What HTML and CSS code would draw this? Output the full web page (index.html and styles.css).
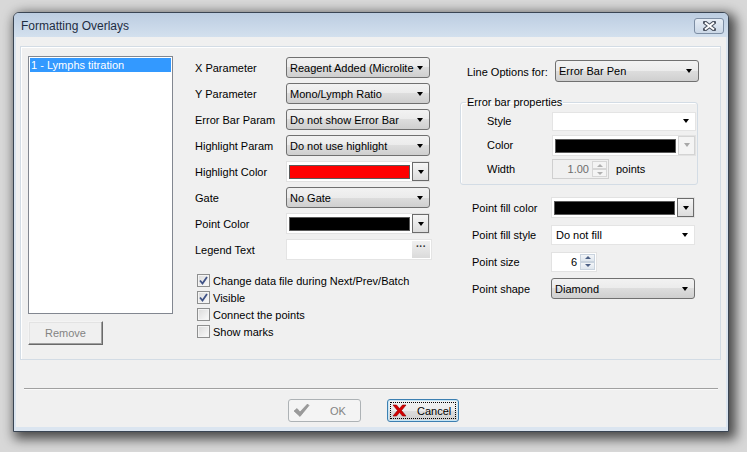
FILE: index.html
```html
<!DOCTYPE html>
<html>
<head>
<meta charset="utf-8">
<link rel="stylesheet" href="styles.css">
</head>
<body>
<div class="window">
  <div class="titlebar">
    <span class="title">Formatting Overlays</span>
    <div class="close">
      <svg width="13" height="10" viewBox="0 0 13 10"><path d="M2 1.5 L11 8.5 M11 1.5 L2 8.5" stroke="#4a5260" stroke-width="4" stroke-linecap="square" fill="none"/><path d="M2 1.5 L11 8.5 M11 1.5 L2 8.5" stroke="#fff" stroke-width="2" fill="none"/></svg>
    </div>
  </div>
  <div class="client">
    <div class="panel">
      <div class="left">
        <div class="list"><div class="item">1 - Lymphs titration</div></div>
        <div class="classic-btn">Remove</div>
      </div>
      <div class="middle">
        <div class="form">
          <span class="lbl">X Parameter</span>
          <div class="combo"><span>Reagent Added (Microlite</span><i class="arrow"></i></div>
          <span class="lbl">Y Parameter</span>
          <div class="combo"><span>Mono/Lymph Ratio</span><i class="arrow"></i></div>
          <span class="lbl">Error Bar Param</span>
          <div class="combo"><span>Do not show Error Bar</span><i class="arrow"></i></div>
          <span class="lbl">Highlight Param</span>
          <div class="combo"><span>Do not use highlight</span><i class="arrow"></i></div>
          <span class="lbl">Highlight Color</span>
          <div class="colorcombo"><div class="swatch red"></div><div class="cbtn"><i class="arrow"></i></div></div>
          <span class="lbl">Gate</span>
          <div class="combo"><span>No Gate</span><i class="arrow"></i></div>
          <span class="lbl">Point Color</span>
          <div class="colorcombo"><div class="swatch black"></div><div class="cbtn"><i class="arrow"></i></div></div>
          <span class="lbl">Legend Text</span>
          <div class="textbox wide"><span class="fill"></span><div class="dots">&middot;&middot;&middot;</div></div>
        </div>
        <div class="checks">
          <div class="check"><span class="box on"><svg width="9" height="9" viewBox="0 0 9 9"><path d="M1 4.5 L3.5 7.5 L8 1" stroke="#3f5286" stroke-width="1.8" fill="none"/></svg></span>Change data file during Next/Prev/Batch</div>
          <div class="check"><span class="box on"><svg width="9" height="9" viewBox="0 0 9 9"><path d="M1 4.5 L3.5 7.5 L8 1" stroke="#3f5286" stroke-width="1.8" fill="none"/></svg></span>Visible</div>
          <div class="check"><span class="box"></span>Connect the points</div>
          <div class="check"><span class="box"></span>Show marks</div>
        </div>
      </div>
      <div class="right">
        <div class="lineopts">
          <span class="lbl lo">Line Options for:</span>
          <div class="combo tall"><span>Error Bar Pen</span><i class="arrow"></i></div>
        </div>
        <fieldset class="group">
          <legend>Error bar properties</legend>
          <div class="ggrid">
            <span class="lbl">Style</span>
            <div class="flat"><span></span><i class="arrow"></i></div>
            <span class="lbl">Color</span>
            <div class="colorcombo"><div class="swatch black"></div><div class="cbtn dis"><i class="arrow grey"></i></div></div>
            <span class="lbl">Width</span>
            <div class="widthrow">
              <div class="spin dis w57"><span class="val">1.00</span><div class="arrows"><div class="up"><i></i></div><div class="down"><i></i></div></div></div>
              <span class="pts">points</span>
            </div>
          </div>
        </fieldset>
        <div class="lgrid">
          <span class="lbl">Point fill color</span>
          <div class="colorcombo"><div class="swatch black"></div><div class="cbtn"><i class="arrow"></i></div></div>
          <span class="lbl">Point fill style</span>
          <div class="flat"><span>Do not fill</span><i class="arrow"></i></div>
          <span class="lbl">Point size</span>
          <div class="spin w46"><span class="val">6</span><div class="arrows"><div class="up"><i></i></div><div class="down"><i></i></div></div></div>
          <span class="lbl">Point shape</span>
          <div class="combo"><span>Diamond</span><i class="arrow"></i></div>
        </div>
      </div>
    </div>
    <div class="sep"></div>
    <div class="buttons">
      <div class="btn ok">
        <svg width="17" height="15" viewBox="0 0 17 15"><path d="M1 8 L4 5.5 L7 9 L14.5 1 L16 2.5 L7 13.5 Z" fill="#9a9a9a" stroke="#8a8a8a" stroke-width="0.6"/></svg>
        <span class="btxt">OK</span>
      </div>
      <div class="btn cancel">
        <div class="focus">
          <svg width="15" height="13" viewBox="0 0 15 13"><path d="M1 1 L4.5 1 L7.5 4.5 L10.5 1 L14 1 L9.5 6.5 L14 12 L10.5 12 L7.5 8.5 L4.5 12 L1 12 L5.5 6.5 Z" fill="#d40000" stroke="#8c0000" stroke-width="0.6"/></svg>
          <span class="btxt">Cancel</span>
        </div>
      </div>
    </div>
  </div>
</div>
</body>
</html>
```
FILE: styles.css
```css
html, body {
  margin: 0;
  padding: 0;
}
body {
  width: 747px;
  height: 452px;
  overflow: hidden;
  background: #d8d8d8;
  font-family: "Liberation Sans", Arial, sans-serif;
  font-size: 11px;
  color: #000;
}
.window {
  box-sizing: border-box;
  width: 716px;
  height: 420px;
  margin: 12px 0 0 13px;
  display: inline-flex;
  flex-direction: column;
  vertical-align: top;
  border: 1px solid #3a4553;
  border-radius: 6px 6px 0 0;
  background: #dbe5f0;
  box-shadow: 4px 4px 12px 3px rgba(0, 0, 0, 0.66);
}
.titlebar {
  height: 24px;
  flex: none;
  display: flex;
  align-items: center;
  padding: 2px 4px 0 7px;
  box-sizing: border-box;
  background: linear-gradient(#bccde1, #d3e0ee);
  border-radius: 5px 5px 0 0;
}
.title {
  font-size: 12px;
  color: #1e2d42;
}
.close {
  margin-left: auto;
  width: 30px;
  height: 16px;
  box-sizing: border-box;
  border: 1px solid #7d8ea4;
  border-radius: 3px;
  background: linear-gradient(#e6edf5, #cbd8e7);
  display: flex;
  align-items: center;
  justify-content: center;
}
.client {
  flex: 1;
  margin: 0 2px 4px 2px;
  background: #f0f0f0;
  display: flex;
  flex-direction: column;
  padding: 9px 5px 0 4px;
}
.panel {
  height: 314px;
  box-sizing: border-box;
  border: 1px solid #d3dce5;
  box-shadow: inset 1px 1px 0 #fff;
  display: flex;
  padding: 9px 0 0 7px;
}
.left {
  width: 145px;
  display: flex;
  flex-direction: column;
  align-items: flex-start;
}
.list {
  width: 145px;
  height: 258px;
  box-sizing: border-box;
  border: 1px solid #828790;
  background: #fff;
  padding: 1px;
}
.item {
  height: 14px;
  line-height: 14px;
  background: #3399ff;
  color: #fff;
  padding-left: 1px;
}
.classic-btn {
  margin-top: 7px;
  width: 75px;
  height: 24px;
  box-sizing: border-box;
  border: 1px solid;
  border-color: #f4f4f4 #6a6a6a #6a6a6a #f4f4f4;
  box-shadow: inset -1px -1px 0 #a0a0a0, inset 1px 1px 0 #e3e3e3;
  background: #f0f0f0;
  color: #838383;
  display: flex;
  align-items: center;
  justify-content: center;
}
.middle {
  margin-left: 22px;
  width: 237px;
}
.form {
  display: grid;
  grid-template-columns: 91px 144px;
  grid-template-rows: repeat(8, 21px);
  row-gap: 5px;
  align-items: center;
  margin-top: 1px;
}
.lbl {
  white-space: nowrap;
}
.combo, .flat {
  height: 21px;
  box-sizing: border-box;
  display: flex;
  align-items: center;
  padding: 0 6px 0 3px;
  white-space: nowrap;
  overflow: hidden;
}
.combo {
  border: 1px solid #707070;
  border-radius: 3px;
  background: linear-gradient(#f2f2f2 0%, #ebebeb 50%, #dddddd 50%, #cfcfcf 100%);
}
.combo.tall {
  height: 22px;
}
.flat {
  height: 19px;
  background: #fff;
  border: 1px solid #e4e4e4;
  padding-left: 4px;
}
.combo span, .flat span {
  flex: 1;
  overflow: hidden;
}
.arrow {
  display: block;
  flex: none;
  width: 0;
  height: 0;
  border-left: 3.5px solid transparent;
  border-right: 3.5px solid transparent;
  border-top: 4px solid #000;
}
.arrow.grey {
  border-top-color: #a8a8a8;
}
.colorcombo {
  height: 21px;
  box-sizing: border-box;
  display: flex;
  background: #fff;
  border: 1px solid #e2e2e2;
}
.swatch {
  flex: 1;
  margin: 3px 2px 2px 2px;
  border: 1px solid #5a5a5a;
}
.swatch.red { background: #ff0000; }
.swatch.black { background: #000; }
.cbtn {
  width: 17px;
  box-sizing: border-box;
  border: 1px solid #6b6b6b;
  background: linear-gradient(#f6f6f6, #dcdcdc);
  display: flex;
  align-items: center;
  justify-content: center;
}
.cbtn.dis {
  border-color: #d4d4d4;
  background: #f4f4f4;
}
.textbox {
  height: 21px;
  box-sizing: border-box;
  display: flex;
  background: #fff;
  border: 1px solid #e4e4e4;
}
.textbox.wide {
  width: 146px;
}
.textbox .fill {
  flex: 1;
}
.dots {
  width: 18px;
  margin: 1px 1px 1px 0;
  background: linear-gradient(#f0f0f0, #dadada);
  font-weight: bold;
  font-size: 10px;
  line-height: 12px;
  text-align: center;
  color: #303030;
}
.checks {
  margin-top: 12px;
  padding-left: 2px;
}
.check {
  height: 17px;
  display: flex;
  align-items: center;
  gap: 3px;
  white-space: nowrap;
}
.box {
  width: 13px;
  height: 13px;
  box-sizing: border-box;
  border: 1px solid #8e8f8f;
  background: linear-gradient(135deg, #dadada, #fbfbfb);
  box-shadow: inset 0 0 0 1px #f4f4f4;
  display: flex;
  align-items: center;
  justify-content: center;
}
.right {
  margin-left: 28px;
  width: 240px;
}
.lineopts {
  margin-top: 4px;
  display: flex;
  align-items: center;
  padding-left: 7px;
}
.lineopts .lo {
  width: 88px;
  padding-top: 2px;
}
.lineopts .combo {
  width: 144px;
}
.group {
  margin: 14px 0 0 0;
  padding: 0 0 5px 0;
  width: 238px;
  box-sizing: border-box;
  border: 1px solid #d3dce5;
  border-radius: 3px;
  box-shadow: inset 1px 1px 0 #fff;
}
.group legend {
  padding: 0 1px;
  margin-left: 5px;
  line-height: 13px;
}
.ggrid {
  display: grid;
  grid-template-columns: 65px 144px;
  grid-template-rows: repeat(3, 20px);
  row-gap: 4px;
  align-items: center;
  padding-left: 26px;
  margin-top: 2px;
}
.widthrow {
  display: flex;
  align-items: center;
  gap: 7px;
}
.spin {
  height: 20px;
  box-sizing: border-box;
  display: flex;
  background: #fff;
  border: 1px solid #e2e2e2;
}
.spin.w57 { width: 57px; }
.spin.w46 { width: 46px; }
.spin .val {
  flex: 1;
  text-align: right;
  padding-right: 3px;
  line-height: 18px;
}
.spin.dis {
  background: #f0f0f0;
  border-color: #cfcfcf;
  color: #6d6d6d;
}
.arrows {
  width: 15px;
  margin: 1px 1px 1px 0;
  display: flex;
  flex-direction: column;
  gap: 0;
}
.arrows .up, .arrows .down {
  flex: 1;
  box-sizing: border-box;
  border: 1px solid #c9d3de;
  background: linear-gradient(#f3f5f8, #dfe6ee);
  display: flex;
  align-items: center;
  justify-content: center;
}
.arrows .up i {
  width: 0; height: 0;
  border-left: 3px solid transparent;
  border-right: 3px solid transparent;
  border-bottom: 3px solid #4d6185;
}
.arrows .down i {
  width: 0; height: 0;
  border-left: 3px solid transparent;
  border-right: 3px solid transparent;
  border-top: 3px solid #4d6185;
}
.spin.dis .arrows .up, .spin.dis .arrows .down {
  border-color: #d6d6d6;
  background: #f4f4f4;
}
.spin.dis .arrows .up i { border-bottom-color: #b0b0b0; }
.spin.dis .arrows .down i { border-top-color: #b0b0b0; }
.lgrid {
  display: grid;
  grid-template-columns: 79px 144px;
  grid-template-rows: repeat(4, 21px);
  row-gap: 6px;
  align-items: center;
  padding-left: 12px;
  margin-top: 12px;
}
.lgrid .flat {
  height: 20px;
}
.sep {
  margin: 28px 3px 0 4px;
  height: 1px;
  background: #a0a0a0;
  box-shadow: 0 1px 0 #fafafa;
}
.buttons {
  display: flex;
  justify-content: center;
  gap: 26px;
  margin-top: 10px;
  padding-left: 6px;
}
.btn {
  height: 23px;
  box-sizing: border-box;
  border-radius: 3px;
  display: flex;
  align-items: center;
}
.btn.ok {
  width: 73px;
  border: 1px solid #adb2b5;
  background: #f4f4f4;
  color: #838383;
  padding-left: 4px;
}
.btn.ok .btxt {
  margin-left: 20px;
}
.btn.cancel {
  width: 72px;
  border: 1px solid #3c7fb1;
  box-shadow: inset 0 0 0 1px #c7e6f6;
  background: linear-gradient(#f2f2f2 0%, #ebebeb 50%, #dddddd 50%, #cfcfcf 100%);
  padding: 2px;
}
.focus {
  flex: 1;
  align-self: stretch;
  display: flex;
  align-items: center;
  border: 1px dotted #000;
  padding-left: 1px;
}
.btn.cancel .btxt {
  margin-left: 10px;
}
```
